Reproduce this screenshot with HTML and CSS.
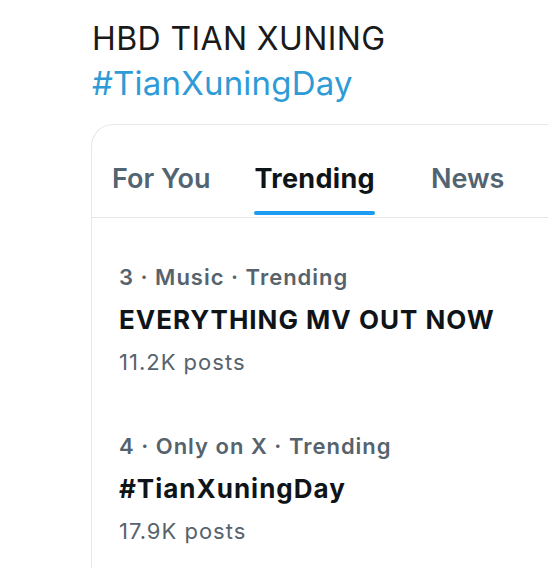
FILE: index.html
```html
<!DOCTYPE html>
<html>
<head>
  <title>Trending</title>
  <link rel="stylesheet" href="styles.css">
</head>
<body>
  <div class="post">
    <p class="post-title">HBD TIAN XUNING</p>
    <p class="post-tag">#TianXuningDay</p>
  </div>

  <div class="card">
    <nav class="tabs">
      <span class="tab tab-foryou">For You</span>
      <span class="tab tab-trending active">Trending</span>
      <span class="tab">News</span>
    </nav>

    <div class="trend">
      <p class="trend-meta">3 · Music · Trending</p>
      <p class="trend-name">EVERYTHING MV OUT NOW</p>
      <p class="trend-count">11.2K posts</p>
    </div>

    <div class="trend">
      <p class="trend-meta">4 · Only on X · Trending</p>
      <p class="trend-name">#TianXuningDay</p>
      <p class="trend-count">17.9K posts</p>
    </div>
  </div>
</body>
</html>
```

FILE: styles.css
```css
body {
  font-family: Inter, "Noto Sans", sans-serif;
  margin: 0;
  padding: 0;
  background-color: #fff;
  color: #0f1419;
  overflow: hidden;
}

p {
  margin: 0;
}

/* Post text above the screenshot card */
.post {
  padding: 18px 0 0 92px;
}

.post-title {
  font-size: 32px;
  letter-spacing: 0.4px;
  line-height: 42px;
  color: #1a1a1a;
}

.post-tag {
  font-size: 33px;
  letter-spacing: 0.2px;
  line-height: 46px;
  color: #2f9bd6;
}

/* Card with tabs and trends */
.card {
  margin: 18px 0 0 91px;
  border: 1px solid #e8e8e8;
  border-right: none;
  border-bottom: none;
  border-top-left-radius: 22px;
  height: 460px;
}

.tabs {
  display: flex;
  padding: 37px 0 0 20px;
  border-bottom: 1px solid #e6e6e6;
}

.tab {
  font-size: 27px;
  font-weight: 600;
  color: #536471;
  padding-bottom: 22px;
  position: relative;
}

.tab-foryou {
  margin-right: 44px;
}

.tab-trending {
  margin-right: 56px;
}

.tab.active {
  font-weight: 700;
  letter-spacing: 0.3px;
  color: #0f1419;
}

.tab.active::after {
  content: "";
  position: absolute;
  left: -1px;
  right: 0;
  bottom: 2px;
  height: 4px;
  border-radius: 2px;
  background-color: #1d9bf0;
}

.trend {
  padding: 44px 0 0 27px;
}

.trend + .trend {
  padding-top: 54px;
}

.trend-meta {
  font-size: 22px;
  font-weight: 600;
  letter-spacing: 1px;
  color: #56636d;
  line-height: 30px;
}

.trend-name {
  font-size: 26px;
  font-weight: 700;
  letter-spacing: 1px;
  line-height: 36px;
  margin-top: 10px;
}

.trend-count {
  font-size: 22px;
  letter-spacing: 1px;
  color: #56636d;
  line-height: 30px;
  margin-top: 9px;
}
```
